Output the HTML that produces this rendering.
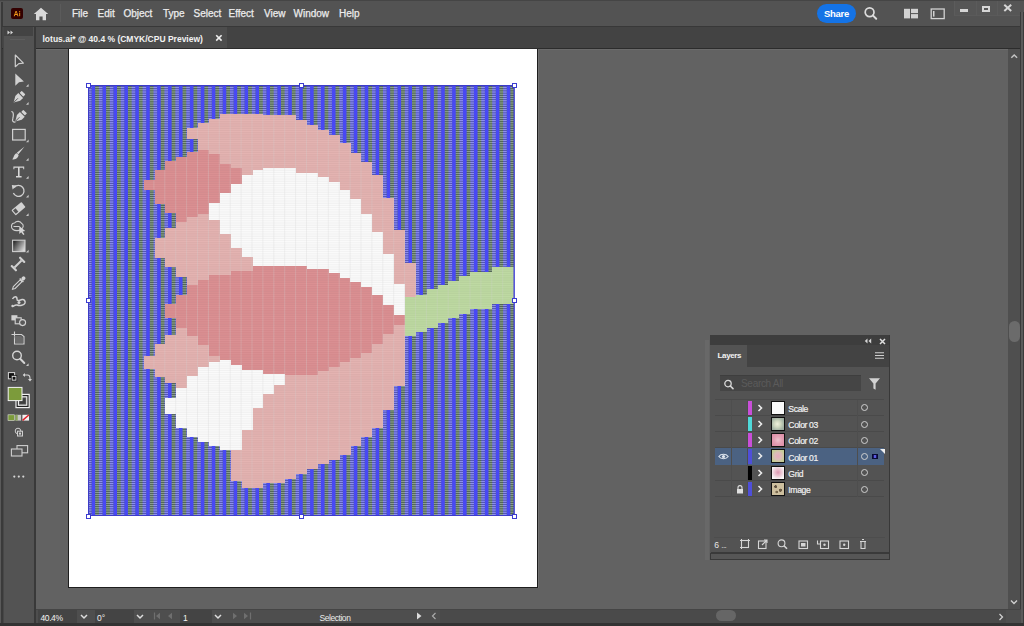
<!DOCTYPE html>
<html><head><meta charset="utf-8">
<style>
*{margin:0;padding:0;box-sizing:border-box}
html,body{width:1024px;height:626px;overflow:hidden;background:#3a3a3a;font-family:"Liberation Sans",sans-serif;position:relative}
.a{position:absolute}
svg{overflow:visible}
.mi{position:absolute;top:7.5px;font-size:10px;color:#ececec;-webkit-text-stroke:0.25px #ececec}
.lp{fill:#e2adab}.dp{fill:#d9878a}.w{fill:#fbfbfb}.g{fill:#b9d79b}
.row{position:absolute;left:715px;width:169px;height:16.3px;border-bottom:1px solid #4a4a4a}
.cb{position:absolute;left:33px;top:1px;width:3.8px;height:14.3px}
.chev{position:absolute;left:42px;top:4px}
.th{position:absolute;left:56px;top:1px;width:14px;height:14px;border:1px solid #111}
.rt{position:absolute;left:73.3px;top:4.3px;font-size:8.6px;color:#f0f0f0;letter-spacing:-0.35px;-webkit-text-stroke:0.2px #f0f0f0}
.tg{position:absolute;left:146.2px;top:4.8px;width:7px;height:7px;border:1.7px solid #cfcfcf;border-radius:50%}
.ic{stroke:#d6d6d6;fill:none;stroke-width:1.2}
.icf{fill:#d6d6d6}
</style></head><body>
<!-- menu bar -->
<div class="a" style="left:0;top:0;width:1024px;height:26px;background:#535353;border-top:1px solid #454545"></div>
<div class="a" style="left:0;top:2px;width:3px;height:624px;background:#3a3a3a;border-left:1.5px solid #5a5a5a"></div>
<div class="a" style="left:11px;top:8px;width:12px;height:11px;background:#330000;border-radius:2px"></div><svg class="a" style="left:11px;top:8px" width="12" height="11" viewBox="0 0 12 11"><path d="M2.7 8.2 L4.6 3 L5.6 3 L7.5 8.2 L6.5 8.2 L6.1 7 L4.1 7 L3.7 8.2 Z M4.4 6.1 L5.8 6.1 L5.1 4.1 Z" fill="#f59a1a"/><rect x="8.2" y="4.7" width="0.95" height="3.5" fill="#f59a1a"/><rect x="8.2" y="3.1" width="0.95" height="0.95" fill="#f59a1a"/></svg>
<svg class="a" style="left:33px;top:7px" width="16" height="14" viewBox="0 0 16 14"><path d="M8 0.8 L15.2 7 L13 7 L13 13.2 L9.6 13.2 L9.6 9.6 L6.4 9.6 L6.4 13.2 L3 13.2 L3 7 L0.8 7 Z" fill="#d8d8d8"/></svg>
<div class="a" style="left:59.5px;top:4px;width:1px;height:18px;background:#5b5b5b"></div>
<div class="mi" style="left:72px">File</div>
<div class="mi" style="left:97.5px">Edit</div>
<div class="mi" style="left:123.5px">Object</div>
<div class="mi" style="left:163px">Type</div>
<div class="mi" style="left:193.5px">Select</div>
<div class="mi" style="left:228.5px">Effect</div>
<div class="mi" style="left:264px">View</div>
<div class="mi" style="left:293.5px">Window</div>
<div class="mi" style="left:339px">Help</div>
<div class="a" style="left:817px;top:4px;width:39px;height:19px;border-radius:10px;background:#1473e6;color:#fff;font-size:9.5px;line-height:19px;text-align:center;font-weight:bold;letter-spacing:-0.3px">Share</div>
<svg class="a" style="left:863px;top:6px" width="16" height="16" viewBox="0 0 16 16"><circle cx="6.6" cy="6.2" r="4.4" fill="none" stroke="#dcdcdc" stroke-width="1.7"/><path d="M9.8 9.4 L13.2 12.8" stroke="#dcdcdc" stroke-width="2" stroke-linecap="round"/></svg>
<svg class="a" style="left:903px;top:8px" width="16" height="12" viewBox="0 0 16 12"><rect x="1" y="0.8" width="6" height="9.6" fill="#d2d2d2"/><rect x="8" y="0.8" width="7" height="4.3" fill="#d2d2d2"/><rect x="8" y="6.1" width="7" height="4.3" fill="#d2d2d2"/></svg>
<svg class="a" style="left:930px;top:8px" width="16" height="12" viewBox="0 0 16 12"><rect x="1.2" y="1" width="13" height="9.6" fill="none" stroke="#d2d2d2" stroke-width="1.3"/><rect x="3" y="3" width="1.5" height="5.6" fill="#d2d2d2"/></svg>
<div class="a" style="left:954px;top:1px;width:66px;height:15px;background:#565656;border-left:1px solid #5c5c5c;border-bottom:1px solid #5a5a5a"></div>
<div class="a" style="left:975.5px;top:1px;width:1px;height:15px;background:#5b5b5b"></div>
<div class="a" style="left:997px;top:1px;width:1px;height:15px;background:#5b5b5b"></div>
<div class="a" style="left:960px;top:9.4px;width:8px;height:2.2px;background:#d6d6d6"></div>
<div class="a" style="left:982px;top:6px;width:8px;height:6.2px;border:2px solid #d6d6d6"></div>
<svg class="a" style="left:1003px;top:4px" width="10" height="8" viewBox="0 0 10 8"><path d="M1.3 0.8 L8.2 7 M8.2 0.8 L1.3 7" stroke="#d6d6d6" stroke-width="2"/></svg>
<!-- tab bar -->
<div class="a" style="left:2px;top:25.5px;width:1018px;height:23.5px;background:#434343;border-top:1.5px solid #383838;border-bottom:1.5px solid #2c2c2c"></div>
<div class="a" style="left:35px;top:27px;width:192px;height:21px;background:#4d4d4d"></div>
<div class="a" style="left:42.5px;top:33.5px;font-size:8.5px;color:#f2f2f2;font-weight:bold;white-space:nowrap">lotus.ai* @ 40.4 % (CMYK/CPU Preview)</div>
<svg class="a" style="left:215px;top:34px" width="8" height="8" viewBox="0 0 8 8"><path d="M1.2 1.2 L6.6 6.6 M6.6 1.2 L1.2 6.6" stroke="#eee" stroke-width="1.6"/></svg>
<!-- canvas -->
<div class="a" style="left:35.5px;top:49px;width:973px;height:560px;background:#626262;border-top:1.5px solid #6b6b6b"></div>
<div class="a" style="left:68.2px;top:49px;width:470.3px;height:538.5px;background:#fff;border:1.5px solid #1e1e1e;border-top:none;box-shadow:1px 0 0 #707070"></div>
<svg class="a" style="left:88.0px;top:85.4px;overflow:hidden" width="426.5" height="431" viewBox="0 0 426.5 431">
<defs>
<pattern id="bp" width="10.9" height="2.2" patternUnits="userSpaceOnUse" x="0" y="0">
<rect width="10.9" height="2.2" fill="#6a8756"/>
<rect width="3.7" height="2.2" fill="#6c6cee"/>
<rect y="0" width="10.9" height="0.7" fill="#c4c8f0" opacity="0.55"/>
<rect y="1.3" width="10.9" height="0.6" fill="#2c3658" opacity="0.65"/>
<rect x="3.3" width="4.3" height="2.2" fill="#4848f4"/>
</pattern>
<pattern id="gp" width="10.9" height="2.2" patternUnits="userSpaceOnUse" x="0" y="0">
<rect y="1.2" width="10.9" height="0.7" fill="#a8a8a8" opacity="0.2"/>
<rect y="0.1" width="10.9" height="0.5" fill="#ffffff" opacity="0.12"/>
<rect x="0" width="0.9" height="2.2" fill="#d0d0d0" opacity="0.3"/>
</pattern>
</defs>
<rect width="426.0" height="431" fill="#6a8756"/>
<rect x="-10.98" width="3.6" height="431" fill="#6c6cee"/>
<rect x="-0.05" width="3.6" height="431" fill="#6c6cee"/>
<rect x="10.88" width="3.6" height="431" fill="#6c6cee"/>
<rect x="21.80" width="3.6" height="431" fill="#6c6cee"/>
<rect x="32.73" width="3.6" height="431" fill="#6c6cee"/>
<rect x="43.65" width="3.6" height="431" fill="#6c6cee"/>
<rect x="54.58" width="3.6" height="431" fill="#6c6cee"/>
<rect x="65.51" width="3.6" height="431" fill="#6c6cee"/>
<rect x="76.43" width="3.6" height="431" fill="#6c6cee"/>
<rect x="87.36" width="3.6" height="431" fill="#6c6cee"/>
<rect x="98.28" width="3.6" height="431" fill="#6c6cee"/>
<rect x="109.21" width="3.6" height="431" fill="#6c6cee"/>
<rect x="120.14" width="3.6" height="431" fill="#6c6cee"/>
<rect x="131.06" width="3.6" height="431" fill="#6c6cee"/>
<rect x="141.99" width="3.6" height="431" fill="#6c6cee"/>
<rect x="152.91" width="3.6" height="431" fill="#6c6cee"/>
<rect x="163.84" width="3.6" height="431" fill="#6c6cee"/>
<rect x="174.77" width="3.6" height="431" fill="#6c6cee"/>
<rect x="185.69" width="3.6" height="431" fill="#6c6cee"/>
<rect x="196.62" width="3.6" height="431" fill="#6c6cee"/>
<rect x="207.54" width="3.6" height="431" fill="#6c6cee"/>
<rect x="218.47" width="3.6" height="431" fill="#6c6cee"/>
<rect x="229.40" width="3.6" height="431" fill="#6c6cee"/>
<rect x="240.32" width="3.6" height="431" fill="#6c6cee"/>
<rect x="251.25" width="3.6" height="431" fill="#6c6cee"/>
<rect x="262.17" width="3.6" height="431" fill="#6c6cee"/>
<rect x="273.10" width="3.6" height="431" fill="#6c6cee"/>
<rect x="284.03" width="3.6" height="431" fill="#6c6cee"/>
<rect x="294.95" width="3.6" height="431" fill="#6c6cee"/>
<rect x="305.88" width="3.6" height="431" fill="#6c6cee"/>
<rect x="316.80" width="3.6" height="431" fill="#6c6cee"/>
<rect x="327.73" width="3.6" height="431" fill="#6c6cee"/>
<rect x="338.66" width="3.6" height="431" fill="#6c6cee"/>
<rect x="349.58" width="3.6" height="431" fill="#6c6cee"/>
<rect x="360.51" width="3.6" height="431" fill="#6c6cee"/>
<rect x="371.43" width="3.6" height="431" fill="#6c6cee"/>
<rect x="382.36" width="3.6" height="431" fill="#6c6cee"/>
<rect x="393.29" width="3.6" height="431" fill="#6c6cee"/>
<rect x="404.21" width="3.6" height="431" fill="#6c6cee"/>
<rect x="415.14" width="3.6" height="431" fill="#6c6cee"/>
<rect x="426.06" width="3.6" height="431" fill="#6c6cee"/>
<rect y="0.00" width="426.0" height="0.7" fill="#c4c8f0" opacity="0.55"/><rect y="1.30" width="426.0" height="0.6" fill="#2c3658" opacity="0.65"/>
<rect y="2.20" width="426.0" height="0.7" fill="#c4c8f0" opacity="0.55"/><rect y="3.50" width="426.0" height="0.6" fill="#2c3658" opacity="0.65"/>
<rect y="4.40" width="426.0" height="0.7" fill="#c4c8f0" opacity="0.55"/><rect y="5.70" width="426.0" height="0.6" fill="#2c3658" opacity="0.65"/>
<rect y="6.60" width="426.0" height="0.7" fill="#c4c8f0" opacity="0.55"/><rect y="7.90" width="426.0" height="0.6" fill="#2c3658" opacity="0.65"/>
<rect y="8.80" width="426.0" height="0.7" fill="#c4c8f0" opacity="0.55"/><rect y="10.10" width="426.0" height="0.6" fill="#2c3658" opacity="0.65"/>
<rect y="11.00" width="426.0" height="0.7" fill="#c4c8f0" opacity="0.55"/><rect y="12.30" width="426.0" height="0.6" fill="#2c3658" opacity="0.65"/>
<rect y="13.20" width="426.0" height="0.7" fill="#c4c8f0" opacity="0.55"/><rect y="14.50" width="426.0" height="0.6" fill="#2c3658" opacity="0.65"/>
<rect y="15.40" width="426.0" height="0.7" fill="#c4c8f0" opacity="0.55"/><rect y="16.70" width="426.0" height="0.6" fill="#2c3658" opacity="0.65"/>
<rect y="17.60" width="426.0" height="0.7" fill="#c4c8f0" opacity="0.55"/><rect y="18.90" width="426.0" height="0.6" fill="#2c3658" opacity="0.65"/>
<rect y="19.80" width="426.0" height="0.7" fill="#c4c8f0" opacity="0.55"/><rect y="21.10" width="426.0" height="0.6" fill="#2c3658" opacity="0.65"/>
<rect y="22.00" width="426.0" height="0.7" fill="#c4c8f0" opacity="0.55"/><rect y="23.30" width="426.0" height="0.6" fill="#2c3658" opacity="0.65"/>
<rect y="24.20" width="426.0" height="0.7" fill="#c4c8f0" opacity="0.55"/><rect y="25.50" width="426.0" height="0.6" fill="#2c3658" opacity="0.65"/>
<rect y="26.40" width="426.0" height="0.7" fill="#c4c8f0" opacity="0.55"/><rect y="27.70" width="426.0" height="0.6" fill="#2c3658" opacity="0.65"/>
<rect y="28.60" width="426.0" height="0.7" fill="#c4c8f0" opacity="0.55"/><rect y="29.90" width="426.0" height="0.6" fill="#2c3658" opacity="0.65"/>
<rect y="30.80" width="426.0" height="0.7" fill="#c4c8f0" opacity="0.55"/><rect y="32.10" width="426.0" height="0.6" fill="#2c3658" opacity="0.65"/>
<rect y="33.00" width="426.0" height="0.7" fill="#c4c8f0" opacity="0.55"/><rect y="34.30" width="426.0" height="0.6" fill="#2c3658" opacity="0.65"/>
<rect y="35.20" width="426.0" height="0.7" fill="#c4c8f0" opacity="0.55"/><rect y="36.50" width="426.0" height="0.6" fill="#2c3658" opacity="0.65"/>
<rect y="37.40" width="426.0" height="0.7" fill="#c4c8f0" opacity="0.55"/><rect y="38.70" width="426.0" height="0.6" fill="#2c3658" opacity="0.65"/>
<rect y="39.60" width="426.0" height="0.7" fill="#c4c8f0" opacity="0.55"/><rect y="40.90" width="426.0" height="0.6" fill="#2c3658" opacity="0.65"/>
<rect y="41.80" width="426.0" height="0.7" fill="#c4c8f0" opacity="0.55"/><rect y="43.10" width="426.0" height="0.6" fill="#2c3658" opacity="0.65"/>
<rect y="44.00" width="426.0" height="0.7" fill="#c4c8f0" opacity="0.55"/><rect y="45.30" width="426.0" height="0.6" fill="#2c3658" opacity="0.65"/>
<rect y="46.20" width="426.0" height="0.7" fill="#c4c8f0" opacity="0.55"/><rect y="47.50" width="426.0" height="0.6" fill="#2c3658" opacity="0.65"/>
<rect y="48.40" width="426.0" height="0.7" fill="#c4c8f0" opacity="0.55"/><rect y="49.70" width="426.0" height="0.6" fill="#2c3658" opacity="0.65"/>
<rect y="50.60" width="426.0" height="0.7" fill="#c4c8f0" opacity="0.55"/><rect y="51.90" width="426.0" height="0.6" fill="#2c3658" opacity="0.65"/>
<rect y="52.80" width="426.0" height="0.7" fill="#c4c8f0" opacity="0.55"/><rect y="54.10" width="426.0" height="0.6" fill="#2c3658" opacity="0.65"/>
<rect y="55.00" width="426.0" height="0.7" fill="#c4c8f0" opacity="0.55"/><rect y="56.30" width="426.0" height="0.6" fill="#2c3658" opacity="0.65"/>
<rect y="57.20" width="426.0" height="0.7" fill="#c4c8f0" opacity="0.55"/><rect y="58.50" width="426.0" height="0.6" fill="#2c3658" opacity="0.65"/>
<rect y="59.40" width="426.0" height="0.7" fill="#c4c8f0" opacity="0.55"/><rect y="60.70" width="426.0" height="0.6" fill="#2c3658" opacity="0.65"/>
<rect y="61.60" width="426.0" height="0.7" fill="#c4c8f0" opacity="0.55"/><rect y="62.90" width="426.0" height="0.6" fill="#2c3658" opacity="0.65"/>
<rect y="63.80" width="426.0" height="0.7" fill="#c4c8f0" opacity="0.55"/><rect y="65.10" width="426.0" height="0.6" fill="#2c3658" opacity="0.65"/>
<rect y="66.00" width="426.0" height="0.7" fill="#c4c8f0" opacity="0.55"/><rect y="67.30" width="426.0" height="0.6" fill="#2c3658" opacity="0.65"/>
<rect y="68.20" width="426.0" height="0.7" fill="#c4c8f0" opacity="0.55"/><rect y="69.50" width="426.0" height="0.6" fill="#2c3658" opacity="0.65"/>
<rect y="70.40" width="426.0" height="0.7" fill="#c4c8f0" opacity="0.55"/><rect y="71.70" width="426.0" height="0.6" fill="#2c3658" opacity="0.65"/>
<rect y="72.60" width="426.0" height="0.7" fill="#c4c8f0" opacity="0.55"/><rect y="73.90" width="426.0" height="0.6" fill="#2c3658" opacity="0.65"/>
<rect y="74.80" width="426.0" height="0.7" fill="#c4c8f0" opacity="0.55"/><rect y="76.10" width="426.0" height="0.6" fill="#2c3658" opacity="0.65"/>
<rect y="77.00" width="426.0" height="0.7" fill="#c4c8f0" opacity="0.55"/><rect y="78.30" width="426.0" height="0.6" fill="#2c3658" opacity="0.65"/>
<rect y="79.20" width="426.0" height="0.7" fill="#c4c8f0" opacity="0.55"/><rect y="80.50" width="426.0" height="0.6" fill="#2c3658" opacity="0.65"/>
<rect y="81.40" width="426.0" height="0.7" fill="#c4c8f0" opacity="0.55"/><rect y="82.70" width="426.0" height="0.6" fill="#2c3658" opacity="0.65"/>
<rect y="83.60" width="426.0" height="0.7" fill="#c4c8f0" opacity="0.55"/><rect y="84.90" width="426.0" height="0.6" fill="#2c3658" opacity="0.65"/>
<rect y="85.80" width="426.0" height="0.7" fill="#c4c8f0" opacity="0.55"/><rect y="87.10" width="426.0" height="0.6" fill="#2c3658" opacity="0.65"/>
<rect y="88.00" width="426.0" height="0.7" fill="#c4c8f0" opacity="0.55"/><rect y="89.30" width="426.0" height="0.6" fill="#2c3658" opacity="0.65"/>
<rect y="90.20" width="426.0" height="0.7" fill="#c4c8f0" opacity="0.55"/><rect y="91.50" width="426.0" height="0.6" fill="#2c3658" opacity="0.65"/>
<rect y="92.40" width="426.0" height="0.7" fill="#c4c8f0" opacity="0.55"/><rect y="93.70" width="426.0" height="0.6" fill="#2c3658" opacity="0.65"/>
<rect y="94.60" width="426.0" height="0.7" fill="#c4c8f0" opacity="0.55"/><rect y="95.90" width="426.0" height="0.6" fill="#2c3658" opacity="0.65"/>
<rect y="96.80" width="426.0" height="0.7" fill="#c4c8f0" opacity="0.55"/><rect y="98.10" width="426.0" height="0.6" fill="#2c3658" opacity="0.65"/>
<rect y="99.00" width="426.0" height="0.7" fill="#c4c8f0" opacity="0.55"/><rect y="100.30" width="426.0" height="0.6" fill="#2c3658" opacity="0.65"/>
<rect y="101.20" width="426.0" height="0.7" fill="#c4c8f0" opacity="0.55"/><rect y="102.50" width="426.0" height="0.6" fill="#2c3658" opacity="0.65"/>
<rect y="103.40" width="426.0" height="0.7" fill="#c4c8f0" opacity="0.55"/><rect y="104.70" width="426.0" height="0.6" fill="#2c3658" opacity="0.65"/>
<rect y="105.60" width="426.0" height="0.7" fill="#c4c8f0" opacity="0.55"/><rect y="106.90" width="426.0" height="0.6" fill="#2c3658" opacity="0.65"/>
<rect y="107.80" width="426.0" height="0.7" fill="#c4c8f0" opacity="0.55"/><rect y="109.10" width="426.0" height="0.6" fill="#2c3658" opacity="0.65"/>
<rect y="110.00" width="426.0" height="0.7" fill="#c4c8f0" opacity="0.55"/><rect y="111.30" width="426.0" height="0.6" fill="#2c3658" opacity="0.65"/>
<rect y="112.20" width="426.0" height="0.7" fill="#c4c8f0" opacity="0.55"/><rect y="113.50" width="426.0" height="0.6" fill="#2c3658" opacity="0.65"/>
<rect y="114.40" width="426.0" height="0.7" fill="#c4c8f0" opacity="0.55"/><rect y="115.70" width="426.0" height="0.6" fill="#2c3658" opacity="0.65"/>
<rect y="116.60" width="426.0" height="0.7" fill="#c4c8f0" opacity="0.55"/><rect y="117.90" width="426.0" height="0.6" fill="#2c3658" opacity="0.65"/>
<rect y="118.80" width="426.0" height="0.7" fill="#c4c8f0" opacity="0.55"/><rect y="120.10" width="426.0" height="0.6" fill="#2c3658" opacity="0.65"/>
<rect y="121.00" width="426.0" height="0.7" fill="#c4c8f0" opacity="0.55"/><rect y="122.30" width="426.0" height="0.6" fill="#2c3658" opacity="0.65"/>
<rect y="123.20" width="426.0" height="0.7" fill="#c4c8f0" opacity="0.55"/><rect y="124.50" width="426.0" height="0.6" fill="#2c3658" opacity="0.65"/>
<rect y="125.40" width="426.0" height="0.7" fill="#c4c8f0" opacity="0.55"/><rect y="126.70" width="426.0" height="0.6" fill="#2c3658" opacity="0.65"/>
<rect y="127.60" width="426.0" height="0.7" fill="#c4c8f0" opacity="0.55"/><rect y="128.90" width="426.0" height="0.6" fill="#2c3658" opacity="0.65"/>
<rect y="129.80" width="426.0" height="0.7" fill="#c4c8f0" opacity="0.55"/><rect y="131.10" width="426.0" height="0.6" fill="#2c3658" opacity="0.65"/>
<rect y="132.00" width="426.0" height="0.7" fill="#c4c8f0" opacity="0.55"/><rect y="133.30" width="426.0" height="0.6" fill="#2c3658" opacity="0.65"/>
<rect y="134.20" width="426.0" height="0.7" fill="#c4c8f0" opacity="0.55"/><rect y="135.50" width="426.0" height="0.6" fill="#2c3658" opacity="0.65"/>
<rect y="136.40" width="426.0" height="0.7" fill="#c4c8f0" opacity="0.55"/><rect y="137.70" width="426.0" height="0.6" fill="#2c3658" opacity="0.65"/>
<rect y="138.60" width="426.0" height="0.7" fill="#c4c8f0" opacity="0.55"/><rect y="139.90" width="426.0" height="0.6" fill="#2c3658" opacity="0.65"/>
<rect y="140.80" width="426.0" height="0.7" fill="#c4c8f0" opacity="0.55"/><rect y="142.10" width="426.0" height="0.6" fill="#2c3658" opacity="0.65"/>
<rect y="143.00" width="426.0" height="0.7" fill="#c4c8f0" opacity="0.55"/><rect y="144.30" width="426.0" height="0.6" fill="#2c3658" opacity="0.65"/>
<rect y="145.20" width="426.0" height="0.7" fill="#c4c8f0" opacity="0.55"/><rect y="146.50" width="426.0" height="0.6" fill="#2c3658" opacity="0.65"/>
<rect y="147.40" width="426.0" height="0.7" fill="#c4c8f0" opacity="0.55"/><rect y="148.70" width="426.0" height="0.6" fill="#2c3658" opacity="0.65"/>
<rect y="149.60" width="426.0" height="0.7" fill="#c4c8f0" opacity="0.55"/><rect y="150.90" width="426.0" height="0.6" fill="#2c3658" opacity="0.65"/>
<rect y="151.80" width="426.0" height="0.7" fill="#c4c8f0" opacity="0.55"/><rect y="153.10" width="426.0" height="0.6" fill="#2c3658" opacity="0.65"/>
<rect y="154.00" width="426.0" height="0.7" fill="#c4c8f0" opacity="0.55"/><rect y="155.30" width="426.0" height="0.6" fill="#2c3658" opacity="0.65"/>
<rect y="156.20" width="426.0" height="0.7" fill="#c4c8f0" opacity="0.55"/><rect y="157.50" width="426.0" height="0.6" fill="#2c3658" opacity="0.65"/>
<rect y="158.40" width="426.0" height="0.7" fill="#c4c8f0" opacity="0.55"/><rect y="159.70" width="426.0" height="0.6" fill="#2c3658" opacity="0.65"/>
<rect y="160.60" width="426.0" height="0.7" fill="#c4c8f0" opacity="0.55"/><rect y="161.90" width="426.0" height="0.6" fill="#2c3658" opacity="0.65"/>
<rect y="162.80" width="426.0" height="0.7" fill="#c4c8f0" opacity="0.55"/><rect y="164.10" width="426.0" height="0.6" fill="#2c3658" opacity="0.65"/>
<rect y="165.00" width="426.0" height="0.7" fill="#c4c8f0" opacity="0.55"/><rect y="166.30" width="426.0" height="0.6" fill="#2c3658" opacity="0.65"/>
<rect y="167.20" width="426.0" height="0.7" fill="#c4c8f0" opacity="0.55"/><rect y="168.50" width="426.0" height="0.6" fill="#2c3658" opacity="0.65"/>
<rect y="169.40" width="426.0" height="0.7" fill="#c4c8f0" opacity="0.55"/><rect y="170.70" width="426.0" height="0.6" fill="#2c3658" opacity="0.65"/>
<rect y="171.60" width="426.0" height="0.7" fill="#c4c8f0" opacity="0.55"/><rect y="172.90" width="426.0" height="0.6" fill="#2c3658" opacity="0.65"/>
<rect y="173.80" width="426.0" height="0.7" fill="#c4c8f0" opacity="0.55"/><rect y="175.10" width="426.0" height="0.6" fill="#2c3658" opacity="0.65"/>
<rect y="176.00" width="426.0" height="0.7" fill="#c4c8f0" opacity="0.55"/><rect y="177.30" width="426.0" height="0.6" fill="#2c3658" opacity="0.65"/>
<rect y="178.20" width="426.0" height="0.7" fill="#c4c8f0" opacity="0.55"/><rect y="179.50" width="426.0" height="0.6" fill="#2c3658" opacity="0.65"/>
<rect y="180.40" width="426.0" height="0.7" fill="#c4c8f0" opacity="0.55"/><rect y="181.70" width="426.0" height="0.6" fill="#2c3658" opacity="0.65"/>
<rect y="182.60" width="426.0" height="0.7" fill="#c4c8f0" opacity="0.55"/><rect y="183.90" width="426.0" height="0.6" fill="#2c3658" opacity="0.65"/>
<rect y="184.80" width="426.0" height="0.7" fill="#c4c8f0" opacity="0.55"/><rect y="186.10" width="426.0" height="0.6" fill="#2c3658" opacity="0.65"/>
<rect y="187.00" width="426.0" height="0.7" fill="#c4c8f0" opacity="0.55"/><rect y="188.30" width="426.0" height="0.6" fill="#2c3658" opacity="0.65"/>
<rect y="189.20" width="426.0" height="0.7" fill="#c4c8f0" opacity="0.55"/><rect y="190.50" width="426.0" height="0.6" fill="#2c3658" opacity="0.65"/>
<rect y="191.40" width="426.0" height="0.7" fill="#c4c8f0" opacity="0.55"/><rect y="192.70" width="426.0" height="0.6" fill="#2c3658" opacity="0.65"/>
<rect y="193.60" width="426.0" height="0.7" fill="#c4c8f0" opacity="0.55"/><rect y="194.90" width="426.0" height="0.6" fill="#2c3658" opacity="0.65"/>
<rect y="195.80" width="426.0" height="0.7" fill="#c4c8f0" opacity="0.55"/><rect y="197.10" width="426.0" height="0.6" fill="#2c3658" opacity="0.65"/>
<rect y="198.00" width="426.0" height="0.7" fill="#c4c8f0" opacity="0.55"/><rect y="199.30" width="426.0" height="0.6" fill="#2c3658" opacity="0.65"/>
<rect y="200.20" width="426.0" height="0.7" fill="#c4c8f0" opacity="0.55"/><rect y="201.50" width="426.0" height="0.6" fill="#2c3658" opacity="0.65"/>
<rect y="202.40" width="426.0" height="0.7" fill="#c4c8f0" opacity="0.55"/><rect y="203.70" width="426.0" height="0.6" fill="#2c3658" opacity="0.65"/>
<rect y="204.60" width="426.0" height="0.7" fill="#c4c8f0" opacity="0.55"/><rect y="205.90" width="426.0" height="0.6" fill="#2c3658" opacity="0.65"/>
<rect y="206.80" width="426.0" height="0.7" fill="#c4c8f0" opacity="0.55"/><rect y="208.10" width="426.0" height="0.6" fill="#2c3658" opacity="0.65"/>
<rect y="209.00" width="426.0" height="0.7" fill="#c4c8f0" opacity="0.55"/><rect y="210.30" width="426.0" height="0.6" fill="#2c3658" opacity="0.65"/>
<rect y="211.20" width="426.0" height="0.7" fill="#c4c8f0" opacity="0.55"/><rect y="212.50" width="426.0" height="0.6" fill="#2c3658" opacity="0.65"/>
<rect y="213.40" width="426.0" height="0.7" fill="#c4c8f0" opacity="0.55"/><rect y="214.70" width="426.0" height="0.6" fill="#2c3658" opacity="0.65"/>
<rect y="215.60" width="426.0" height="0.7" fill="#c4c8f0" opacity="0.55"/><rect y="216.90" width="426.0" height="0.6" fill="#2c3658" opacity="0.65"/>
<rect y="217.80" width="426.0" height="0.7" fill="#c4c8f0" opacity="0.55"/><rect y="219.10" width="426.0" height="0.6" fill="#2c3658" opacity="0.65"/>
<rect y="220.00" width="426.0" height="0.7" fill="#c4c8f0" opacity="0.55"/><rect y="221.30" width="426.0" height="0.6" fill="#2c3658" opacity="0.65"/>
<rect y="222.20" width="426.0" height="0.7" fill="#c4c8f0" opacity="0.55"/><rect y="223.50" width="426.0" height="0.6" fill="#2c3658" opacity="0.65"/>
<rect y="224.40" width="426.0" height="0.7" fill="#c4c8f0" opacity="0.55"/><rect y="225.70" width="426.0" height="0.6" fill="#2c3658" opacity="0.65"/>
<rect y="226.60" width="426.0" height="0.7" fill="#c4c8f0" opacity="0.55"/><rect y="227.90" width="426.0" height="0.6" fill="#2c3658" opacity="0.65"/>
<rect y="228.80" width="426.0" height="0.7" fill="#c4c8f0" opacity="0.55"/><rect y="230.10" width="426.0" height="0.6" fill="#2c3658" opacity="0.65"/>
<rect y="231.00" width="426.0" height="0.7" fill="#c4c8f0" opacity="0.55"/><rect y="232.30" width="426.0" height="0.6" fill="#2c3658" opacity="0.65"/>
<rect y="233.20" width="426.0" height="0.7" fill="#c4c8f0" opacity="0.55"/><rect y="234.50" width="426.0" height="0.6" fill="#2c3658" opacity="0.65"/>
<rect y="235.40" width="426.0" height="0.7" fill="#c4c8f0" opacity="0.55"/><rect y="236.70" width="426.0" height="0.6" fill="#2c3658" opacity="0.65"/>
<rect y="237.60" width="426.0" height="0.7" fill="#c4c8f0" opacity="0.55"/><rect y="238.90" width="426.0" height="0.6" fill="#2c3658" opacity="0.65"/>
<rect y="239.80" width="426.0" height="0.7" fill="#c4c8f0" opacity="0.55"/><rect y="241.10" width="426.0" height="0.6" fill="#2c3658" opacity="0.65"/>
<rect y="242.00" width="426.0" height="0.7" fill="#c4c8f0" opacity="0.55"/><rect y="243.30" width="426.0" height="0.6" fill="#2c3658" opacity="0.65"/>
<rect y="244.20" width="426.0" height="0.7" fill="#c4c8f0" opacity="0.55"/><rect y="245.50" width="426.0" height="0.6" fill="#2c3658" opacity="0.65"/>
<rect y="246.40" width="426.0" height="0.7" fill="#c4c8f0" opacity="0.55"/><rect y="247.70" width="426.0" height="0.6" fill="#2c3658" opacity="0.65"/>
<rect y="248.60" width="426.0" height="0.7" fill="#c4c8f0" opacity="0.55"/><rect y="249.90" width="426.0" height="0.6" fill="#2c3658" opacity="0.65"/>
<rect y="250.80" width="426.0" height="0.7" fill="#c4c8f0" opacity="0.55"/><rect y="252.10" width="426.0" height="0.6" fill="#2c3658" opacity="0.65"/>
<rect y="253.00" width="426.0" height="0.7" fill="#c4c8f0" opacity="0.55"/><rect y="254.30" width="426.0" height="0.6" fill="#2c3658" opacity="0.65"/>
<rect y="255.20" width="426.0" height="0.7" fill="#c4c8f0" opacity="0.55"/><rect y="256.50" width="426.0" height="0.6" fill="#2c3658" opacity="0.65"/>
<rect y="257.40" width="426.0" height="0.7" fill="#c4c8f0" opacity="0.55"/><rect y="258.70" width="426.0" height="0.6" fill="#2c3658" opacity="0.65"/>
<rect y="259.60" width="426.0" height="0.7" fill="#c4c8f0" opacity="0.55"/><rect y="260.90" width="426.0" height="0.6" fill="#2c3658" opacity="0.65"/>
<rect y="261.80" width="426.0" height="0.7" fill="#c4c8f0" opacity="0.55"/><rect y="263.10" width="426.0" height="0.6" fill="#2c3658" opacity="0.65"/>
<rect y="264.00" width="426.0" height="0.7" fill="#c4c8f0" opacity="0.55"/><rect y="265.30" width="426.0" height="0.6" fill="#2c3658" opacity="0.65"/>
<rect y="266.20" width="426.0" height="0.7" fill="#c4c8f0" opacity="0.55"/><rect y="267.50" width="426.0" height="0.6" fill="#2c3658" opacity="0.65"/>
<rect y="268.40" width="426.0" height="0.7" fill="#c4c8f0" opacity="0.55"/><rect y="269.70" width="426.0" height="0.6" fill="#2c3658" opacity="0.65"/>
<rect y="270.60" width="426.0" height="0.7" fill="#c4c8f0" opacity="0.55"/><rect y="271.90" width="426.0" height="0.6" fill="#2c3658" opacity="0.65"/>
<rect y="272.80" width="426.0" height="0.7" fill="#c4c8f0" opacity="0.55"/><rect y="274.10" width="426.0" height="0.6" fill="#2c3658" opacity="0.65"/>
<rect y="275.00" width="426.0" height="0.7" fill="#c4c8f0" opacity="0.55"/><rect y="276.30" width="426.0" height="0.6" fill="#2c3658" opacity="0.65"/>
<rect y="277.20" width="426.0" height="0.7" fill="#c4c8f0" opacity="0.55"/><rect y="278.50" width="426.0" height="0.6" fill="#2c3658" opacity="0.65"/>
<rect y="279.40" width="426.0" height="0.7" fill="#c4c8f0" opacity="0.55"/><rect y="280.70" width="426.0" height="0.6" fill="#2c3658" opacity="0.65"/>
<rect y="281.60" width="426.0" height="0.7" fill="#c4c8f0" opacity="0.55"/><rect y="282.90" width="426.0" height="0.6" fill="#2c3658" opacity="0.65"/>
<rect y="283.80" width="426.0" height="0.7" fill="#c4c8f0" opacity="0.55"/><rect y="285.10" width="426.0" height="0.6" fill="#2c3658" opacity="0.65"/>
<rect y="286.00" width="426.0" height="0.7" fill="#c4c8f0" opacity="0.55"/><rect y="287.30" width="426.0" height="0.6" fill="#2c3658" opacity="0.65"/>
<rect y="288.20" width="426.0" height="0.7" fill="#c4c8f0" opacity="0.55"/><rect y="289.50" width="426.0" height="0.6" fill="#2c3658" opacity="0.65"/>
<rect y="290.40" width="426.0" height="0.7" fill="#c4c8f0" opacity="0.55"/><rect y="291.70" width="426.0" height="0.6" fill="#2c3658" opacity="0.65"/>
<rect y="292.60" width="426.0" height="0.7" fill="#c4c8f0" opacity="0.55"/><rect y="293.90" width="426.0" height="0.6" fill="#2c3658" opacity="0.65"/>
<rect y="294.80" width="426.0" height="0.7" fill="#c4c8f0" opacity="0.55"/><rect y="296.10" width="426.0" height="0.6" fill="#2c3658" opacity="0.65"/>
<rect y="297.00" width="426.0" height="0.7" fill="#c4c8f0" opacity="0.55"/><rect y="298.30" width="426.0" height="0.6" fill="#2c3658" opacity="0.65"/>
<rect y="299.20" width="426.0" height="0.7" fill="#c4c8f0" opacity="0.55"/><rect y="300.50" width="426.0" height="0.6" fill="#2c3658" opacity="0.65"/>
<rect y="301.40" width="426.0" height="0.7" fill="#c4c8f0" opacity="0.55"/><rect y="302.70" width="426.0" height="0.6" fill="#2c3658" opacity="0.65"/>
<rect y="303.60" width="426.0" height="0.7" fill="#c4c8f0" opacity="0.55"/><rect y="304.90" width="426.0" height="0.6" fill="#2c3658" opacity="0.65"/>
<rect y="305.80" width="426.0" height="0.7" fill="#c4c8f0" opacity="0.55"/><rect y="307.10" width="426.0" height="0.6" fill="#2c3658" opacity="0.65"/>
<rect y="308.00" width="426.0" height="0.7" fill="#c4c8f0" opacity="0.55"/><rect y="309.30" width="426.0" height="0.6" fill="#2c3658" opacity="0.65"/>
<rect y="310.20" width="426.0" height="0.7" fill="#c4c8f0" opacity="0.55"/><rect y="311.50" width="426.0" height="0.6" fill="#2c3658" opacity="0.65"/>
<rect y="312.40" width="426.0" height="0.7" fill="#c4c8f0" opacity="0.55"/><rect y="313.70" width="426.0" height="0.6" fill="#2c3658" opacity="0.65"/>
<rect y="314.60" width="426.0" height="0.7" fill="#c4c8f0" opacity="0.55"/><rect y="315.90" width="426.0" height="0.6" fill="#2c3658" opacity="0.65"/>
<rect y="316.80" width="426.0" height="0.7" fill="#c4c8f0" opacity="0.55"/><rect y="318.10" width="426.0" height="0.6" fill="#2c3658" opacity="0.65"/>
<rect y="319.00" width="426.0" height="0.7" fill="#c4c8f0" opacity="0.55"/><rect y="320.30" width="426.0" height="0.6" fill="#2c3658" opacity="0.65"/>
<rect y="321.20" width="426.0" height="0.7" fill="#c4c8f0" opacity="0.55"/><rect y="322.50" width="426.0" height="0.6" fill="#2c3658" opacity="0.65"/>
<rect y="323.40" width="426.0" height="0.7" fill="#c4c8f0" opacity="0.55"/><rect y="324.70" width="426.0" height="0.6" fill="#2c3658" opacity="0.65"/>
<rect y="325.60" width="426.0" height="0.7" fill="#c4c8f0" opacity="0.55"/><rect y="326.90" width="426.0" height="0.6" fill="#2c3658" opacity="0.65"/>
<rect y="327.80" width="426.0" height="0.7" fill="#c4c8f0" opacity="0.55"/><rect y="329.10" width="426.0" height="0.6" fill="#2c3658" opacity="0.65"/>
<rect y="330.00" width="426.0" height="0.7" fill="#c4c8f0" opacity="0.55"/><rect y="331.30" width="426.0" height="0.6" fill="#2c3658" opacity="0.65"/>
<rect y="332.20" width="426.0" height="0.7" fill="#c4c8f0" opacity="0.55"/><rect y="333.50" width="426.0" height="0.6" fill="#2c3658" opacity="0.65"/>
<rect y="334.40" width="426.0" height="0.7" fill="#c4c8f0" opacity="0.55"/><rect y="335.70" width="426.0" height="0.6" fill="#2c3658" opacity="0.65"/>
<rect y="336.60" width="426.0" height="0.7" fill="#c4c8f0" opacity="0.55"/><rect y="337.90" width="426.0" height="0.6" fill="#2c3658" opacity="0.65"/>
<rect y="338.80" width="426.0" height="0.7" fill="#c4c8f0" opacity="0.55"/><rect y="340.10" width="426.0" height="0.6" fill="#2c3658" opacity="0.65"/>
<rect y="341.00" width="426.0" height="0.7" fill="#c4c8f0" opacity="0.55"/><rect y="342.30" width="426.0" height="0.6" fill="#2c3658" opacity="0.65"/>
<rect y="343.20" width="426.0" height="0.7" fill="#c4c8f0" opacity="0.55"/><rect y="344.50" width="426.0" height="0.6" fill="#2c3658" opacity="0.65"/>
<rect y="345.40" width="426.0" height="0.7" fill="#c4c8f0" opacity="0.55"/><rect y="346.70" width="426.0" height="0.6" fill="#2c3658" opacity="0.65"/>
<rect y="347.60" width="426.0" height="0.7" fill="#c4c8f0" opacity="0.55"/><rect y="348.90" width="426.0" height="0.6" fill="#2c3658" opacity="0.65"/>
<rect y="349.80" width="426.0" height="0.7" fill="#c4c8f0" opacity="0.55"/><rect y="351.10" width="426.0" height="0.6" fill="#2c3658" opacity="0.65"/>
<rect y="352.00" width="426.0" height="0.7" fill="#c4c8f0" opacity="0.55"/><rect y="353.30" width="426.0" height="0.6" fill="#2c3658" opacity="0.65"/>
<rect y="354.20" width="426.0" height="0.7" fill="#c4c8f0" opacity="0.55"/><rect y="355.50" width="426.0" height="0.6" fill="#2c3658" opacity="0.65"/>
<rect y="356.40" width="426.0" height="0.7" fill="#c4c8f0" opacity="0.55"/><rect y="357.70" width="426.0" height="0.6" fill="#2c3658" opacity="0.65"/>
<rect y="358.60" width="426.0" height="0.7" fill="#c4c8f0" opacity="0.55"/><rect y="359.90" width="426.0" height="0.6" fill="#2c3658" opacity="0.65"/>
<rect y="360.80" width="426.0" height="0.7" fill="#c4c8f0" opacity="0.55"/><rect y="362.10" width="426.0" height="0.6" fill="#2c3658" opacity="0.65"/>
<rect y="363.00" width="426.0" height="0.7" fill="#c4c8f0" opacity="0.55"/><rect y="364.30" width="426.0" height="0.6" fill="#2c3658" opacity="0.65"/>
<rect y="365.20" width="426.0" height="0.7" fill="#c4c8f0" opacity="0.55"/><rect y="366.50" width="426.0" height="0.6" fill="#2c3658" opacity="0.65"/>
<rect y="367.40" width="426.0" height="0.7" fill="#c4c8f0" opacity="0.55"/><rect y="368.70" width="426.0" height="0.6" fill="#2c3658" opacity="0.65"/>
<rect y="369.60" width="426.0" height="0.7" fill="#c4c8f0" opacity="0.55"/><rect y="370.90" width="426.0" height="0.6" fill="#2c3658" opacity="0.65"/>
<rect y="371.80" width="426.0" height="0.7" fill="#c4c8f0" opacity="0.55"/><rect y="373.10" width="426.0" height="0.6" fill="#2c3658" opacity="0.65"/>
<rect y="374.00" width="426.0" height="0.7" fill="#c4c8f0" opacity="0.55"/><rect y="375.30" width="426.0" height="0.6" fill="#2c3658" opacity="0.65"/>
<rect y="376.20" width="426.0" height="0.7" fill="#c4c8f0" opacity="0.55"/><rect y="377.50" width="426.0" height="0.6" fill="#2c3658" opacity="0.65"/>
<rect y="378.40" width="426.0" height="0.7" fill="#c4c8f0" opacity="0.55"/><rect y="379.70" width="426.0" height="0.6" fill="#2c3658" opacity="0.65"/>
<rect y="380.60" width="426.0" height="0.7" fill="#c4c8f0" opacity="0.55"/><rect y="381.90" width="426.0" height="0.6" fill="#2c3658" opacity="0.65"/>
<rect y="382.80" width="426.0" height="0.7" fill="#c4c8f0" opacity="0.55"/><rect y="384.10" width="426.0" height="0.6" fill="#2c3658" opacity="0.65"/>
<rect y="385.00" width="426.0" height="0.7" fill="#c4c8f0" opacity="0.55"/><rect y="386.30" width="426.0" height="0.6" fill="#2c3658" opacity="0.65"/>
<rect y="387.20" width="426.0" height="0.7" fill="#c4c8f0" opacity="0.55"/><rect y="388.50" width="426.0" height="0.6" fill="#2c3658" opacity="0.65"/>
<rect y="389.40" width="426.0" height="0.7" fill="#c4c8f0" opacity="0.55"/><rect y="390.70" width="426.0" height="0.6" fill="#2c3658" opacity="0.65"/>
<rect y="391.60" width="426.0" height="0.7" fill="#c4c8f0" opacity="0.55"/><rect y="392.90" width="426.0" height="0.6" fill="#2c3658" opacity="0.65"/>
<rect y="393.80" width="426.0" height="0.7" fill="#c4c8f0" opacity="0.55"/><rect y="395.10" width="426.0" height="0.6" fill="#2c3658" opacity="0.65"/>
<rect y="396.00" width="426.0" height="0.7" fill="#c4c8f0" opacity="0.55"/><rect y="397.30" width="426.0" height="0.6" fill="#2c3658" opacity="0.65"/>
<rect y="398.20" width="426.0" height="0.7" fill="#c4c8f0" opacity="0.55"/><rect y="399.50" width="426.0" height="0.6" fill="#2c3658" opacity="0.65"/>
<rect y="400.40" width="426.0" height="0.7" fill="#c4c8f0" opacity="0.55"/><rect y="401.70" width="426.0" height="0.6" fill="#2c3658" opacity="0.65"/>
<rect y="402.60" width="426.0" height="0.7" fill="#c4c8f0" opacity="0.55"/><rect y="403.90" width="426.0" height="0.6" fill="#2c3658" opacity="0.65"/>
<rect y="404.80" width="426.0" height="0.7" fill="#c4c8f0" opacity="0.55"/><rect y="406.10" width="426.0" height="0.6" fill="#2c3658" opacity="0.65"/>
<rect y="407.00" width="426.0" height="0.7" fill="#c4c8f0" opacity="0.55"/><rect y="408.30" width="426.0" height="0.6" fill="#2c3658" opacity="0.65"/>
<rect y="409.20" width="426.0" height="0.7" fill="#c4c8f0" opacity="0.55"/><rect y="410.50" width="426.0" height="0.6" fill="#2c3658" opacity="0.65"/>
<rect y="411.40" width="426.0" height="0.7" fill="#c4c8f0" opacity="0.55"/><rect y="412.70" width="426.0" height="0.6" fill="#2c3658" opacity="0.65"/>
<rect y="413.60" width="426.0" height="0.7" fill="#c4c8f0" opacity="0.55"/><rect y="414.90" width="426.0" height="0.6" fill="#2c3658" opacity="0.65"/>
<rect y="415.80" width="426.0" height="0.7" fill="#c4c8f0" opacity="0.55"/><rect y="417.10" width="426.0" height="0.6" fill="#2c3658" opacity="0.65"/>
<rect y="418.00" width="426.0" height="0.7" fill="#c4c8f0" opacity="0.55"/><rect y="419.30" width="426.0" height="0.6" fill="#2c3658" opacity="0.65"/>
<rect y="420.20" width="426.0" height="0.7" fill="#c4c8f0" opacity="0.55"/><rect y="421.50" width="426.0" height="0.6" fill="#2c3658" opacity="0.65"/>
<rect y="422.40" width="426.0" height="0.7" fill="#c4c8f0" opacity="0.55"/><rect y="423.70" width="426.0" height="0.6" fill="#2c3658" opacity="0.65"/>
<rect y="424.60" width="426.0" height="0.7" fill="#c4c8f0" opacity="0.55"/><rect y="425.90" width="426.0" height="0.6" fill="#2c3658" opacity="0.65"/>
<rect y="426.80" width="426.0" height="0.7" fill="#c4c8f0" opacity="0.55"/><rect y="428.10" width="426.0" height="0.6" fill="#2c3658" opacity="0.65"/>
<rect y="429.00" width="426.0" height="0.7" fill="#c4c8f0" opacity="0.55"/><rect y="430.30" width="426.0" height="0.6" fill="#2c3658" opacity="0.65"/>
<rect x="3.55" width="3.6" height="431" fill="#4848f4"/>
<rect x="14.48" width="3.6" height="431" fill="#4848f4"/>
<rect x="25.40" width="3.6" height="431" fill="#4848f4"/>
<rect x="36.33" width="3.6" height="431" fill="#4848f4"/>
<rect x="47.25" width="3.6" height="431" fill="#4848f4"/>
<rect x="58.18" width="3.6" height="431" fill="#4848f4"/>
<rect x="69.11" width="3.6" height="431" fill="#4848f4"/>
<rect x="80.03" width="3.6" height="431" fill="#4848f4"/>
<rect x="90.96" width="3.6" height="431" fill="#4848f4"/>
<rect x="101.88" width="3.6" height="431" fill="#4848f4"/>
<rect x="112.81" width="3.6" height="431" fill="#4848f4"/>
<rect x="123.74" width="3.6" height="431" fill="#4848f4"/>
<rect x="134.66" width="3.6" height="431" fill="#4848f4"/>
<rect x="145.59" width="3.6" height="431" fill="#4848f4"/>
<rect x="156.51" width="3.6" height="431" fill="#4848f4"/>
<rect x="167.44" width="3.6" height="431" fill="#4848f4"/>
<rect x="178.37" width="3.6" height="431" fill="#4848f4"/>
<rect x="189.29" width="3.6" height="431" fill="#4848f4"/>
<rect x="200.22" width="3.6" height="431" fill="#4848f4"/>
<rect x="211.14" width="3.6" height="431" fill="#4848f4"/>
<rect x="222.07" width="3.6" height="431" fill="#4848f4"/>
<rect x="233.00" width="3.6" height="431" fill="#4848f4"/>
<rect x="243.92" width="3.6" height="431" fill="#4848f4"/>
<rect x="254.85" width="3.6" height="431" fill="#4848f4"/>
<rect x="265.77" width="3.6" height="431" fill="#4848f4"/>
<rect x="276.70" width="3.6" height="431" fill="#4848f4"/>
<rect x="287.63" width="3.6" height="431" fill="#4848f4"/>
<rect x="298.55" width="3.6" height="431" fill="#4848f4"/>
<rect x="309.48" width="3.6" height="431" fill="#4848f4"/>
<rect x="320.40" width="3.6" height="431" fill="#4848f4"/>
<rect x="331.33" width="3.6" height="431" fill="#4848f4"/>
<rect x="342.26" width="3.6" height="431" fill="#4848f4"/>
<rect x="353.18" width="3.6" height="431" fill="#4848f4"/>
<rect x="364.11" width="3.6" height="431" fill="#4848f4"/>
<rect x="375.03" width="3.6" height="431" fill="#4848f4"/>
<rect x="385.96" width="3.6" height="431" fill="#4848f4"/>
<rect x="396.89" width="3.6" height="431" fill="#4848f4"/>
<rect x="407.81" width="3.6" height="431" fill="#4848f4"/>
<rect x="418.74" width="3.6" height="431" fill="#4848f4"/>
<g shape-rendering="crispEdges">
<rect class="dp" x="55.6" y="95.4" width="10.94" height="9.1"/>
<rect class="lp" x="55.6" y="271.2" width="10.94" height="12.5"/>
<rect class="dp" x="66.5" y="85.1" width="10.94" height="33.5"/>
<rect class="lp" x="66.5" y="152.6" width="10.94" height="20.3"/>
<rect class="lp" x="66.5" y="259.3" width="10.94" height="32.7"/>
<rect class="dp" x="77.4" y="76.3" width="10.94" height="51.5"/>
<rect class="lp" x="77.4" y="142.6" width="10.94" height="39.4"/>
<rect class="dp" x="77.4" y="218.6" width="10.94" height="14.1"/>
<rect class="lp" x="77.4" y="250.1" width="10.94" height="47.7"/>
<rect class="w" x="77.4" y="312.7" width="10.94" height="16.7"/>
<rect class="dp" x="88.3" y="71.5" width="10.94" height="65.4"/>
<rect class="lp" x="88.3" y="136.9" width="10.94" height="55.1"/>
<rect class="dp" x="88.3" y="209.5" width="10.94" height="33.1"/>
<rect class="lp" x="88.3" y="242.6" width="10.94" height="60.2"/>
<rect class="w" x="88.3" y="302.8" width="10.94" height="40.1"/>
<rect class="lp" x="99.2" y="42.6" width="10.94" height="11.8"/>
<rect class="dp" x="99.2" y="66.7" width="10.94" height="65.2"/>
<rect class="lp" x="99.2" y="131.9" width="10.94" height="67.6"/>
<rect class="dp" x="99.2" y="199.5" width="10.94" height="51.5"/>
<rect class="lp" x="99.2" y="251.0" width="10.94" height="40.1"/>
<rect class="w" x="99.2" y="291.1" width="10.94" height="60.9"/>
<rect class="lp" x="110.1" y="37.8" width="10.94" height="26.8"/>
<rect class="dp" x="110.1" y="64.6" width="10.94" height="64.0"/>
<rect class="lp" x="110.1" y="128.6" width="10.94" height="66.7"/>
<rect class="dp" x="110.1" y="195.3" width="10.94" height="64.8"/>
<rect class="lp" x="110.1" y="260.1" width="10.94" height="21.9"/>
<rect class="w" x="110.1" y="282.0" width="10.94" height="75.0"/>
<rect class="lp" x="120.9" y="33.5" width="10.94" height="35.9"/>
<rect class="dp" x="120.9" y="69.4" width="10.94" height="48.4"/>
<rect class="w" x="120.9" y="117.8" width="10.94" height="17.4"/>
<rect class="lp" x="120.9" y="135.2" width="10.94" height="55.1"/>
<rect class="dp" x="120.9" y="190.3" width="10.94" height="80.9"/>
<rect class="lp" x="120.9" y="271.2" width="10.94" height="5.8"/>
<rect class="w" x="120.9" y="277.0" width="10.94" height="84.2"/>
<rect class="lp" x="131.8" y="28.7" width="10.94" height="49.8"/>
<rect class="dp" x="131.8" y="78.5" width="10.94" height="29.3"/>
<rect class="w" x="131.8" y="107.8" width="10.94" height="40.7"/>
<rect class="lp" x="131.8" y="148.5" width="10.94" height="41.8"/>
<rect class="dp" x="131.8" y="190.3" width="10.94" height="84.3"/>
<rect class="w" x="131.8" y="274.6" width="10.94" height="90.7"/>
<rect class="lp" x="142.7" y="28.7" width="10.94" height="54.4"/>
<rect class="dp" x="142.7" y="83.1" width="10.94" height="15.6"/>
<rect class="w" x="142.7" y="98.7" width="10.94" height="63.9"/>
<rect class="lp" x="142.7" y="162.6" width="10.94" height="23.6"/>
<rect class="dp" x="142.7" y="186.2" width="10.94" height="93.4"/>
<rect class="w" x="142.7" y="279.6" width="10.94" height="85.7"/>
<rect class="lp" x="142.7" y="365.3" width="10.94" height="31.1"/>
<rect class="lp" x="153.6" y="28.7" width="10.94" height="60.9"/>
<rect class="w" x="153.6" y="89.6" width="10.94" height="82.5"/>
<rect class="lp" x="153.6" y="172.1" width="10.94" height="14.1"/>
<rect class="dp" x="153.6" y="186.2" width="10.94" height="98.4"/>
<rect class="w" x="153.6" y="284.6" width="10.94" height="60.5"/>
<rect class="lp" x="153.6" y="345.1" width="10.94" height="58.1"/>
<rect class="lp" x="164.5" y="28.7" width="10.94" height="56.7"/>
<rect class="w" x="164.5" y="85.4" width="10.94" height="95.8"/>
<rect class="dp" x="164.5" y="181.2" width="10.94" height="103.4"/>
<rect class="w" x="164.5" y="284.6" width="10.94" height="38.1"/>
<rect class="lp" x="164.5" y="322.7" width="10.94" height="80.5"/>
<rect class="lp" x="175.4" y="29.6" width="10.94" height="53.3"/>
<rect class="w" x="175.4" y="82.9" width="10.94" height="98.3"/>
<rect class="dp" x="175.4" y="181.2" width="10.94" height="107.4"/>
<rect class="w" x="175.4" y="288.6" width="10.94" height="20.8"/>
<rect class="lp" x="175.4" y="309.4" width="10.94" height="88.3"/>
<rect class="lp" x="186.2" y="30.4" width="10.94" height="52.5"/>
<rect class="w" x="186.2" y="82.9" width="10.94" height="98.3"/>
<rect class="dp" x="186.2" y="181.2" width="10.94" height="107.4"/>
<rect class="w" x="186.2" y="288.6" width="10.94" height="11.7"/>
<rect class="lp" x="186.2" y="300.3" width="10.94" height="97.4"/>
<rect class="lp" x="197.1" y="30.4" width="10.94" height="52.5"/>
<rect class="w" x="197.1" y="82.9" width="10.94" height="98.3"/>
<rect class="dp" x="197.1" y="181.2" width="10.94" height="108.4"/>
<rect class="lp" x="197.1" y="289.6" width="10.94" height="104.0"/>
<rect class="lp" x="208.0" y="35.4" width="10.94" height="52.3"/>
<rect class="w" x="208.0" y="87.7" width="10.94" height="93.3"/>
<rect class="dp" x="208.0" y="181.0" width="10.94" height="109.1"/>
<rect class="lp" x="208.0" y="290.1" width="10.94" height="99.3"/>
<rect class="lp" x="218.9" y="40.3" width="10.94" height="47.4"/>
<rect class="w" x="218.9" y="87.7" width="10.94" height="95.8"/>
<rect class="dp" x="218.9" y="183.5" width="10.94" height="106.6"/>
<rect class="lp" x="218.9" y="290.1" width="10.94" height="94.2"/>
<rect class="lp" x="229.8" y="44.5" width="10.94" height="47.3"/>
<rect class="w" x="229.8" y="91.8" width="10.94" height="91.7"/>
<rect class="dp" x="229.8" y="183.5" width="10.94" height="102.5"/>
<rect class="lp" x="229.8" y="286.0" width="10.94" height="93.3"/>
<rect class="lp" x="240.7" y="49.5" width="10.94" height="47.3"/>
<rect class="w" x="240.7" y="96.8" width="10.94" height="90.8"/>
<rect class="dp" x="240.7" y="187.6" width="10.94" height="94.2"/>
<rect class="lp" x="240.7" y="281.8" width="10.94" height="93.3"/>
<rect class="lp" x="251.6" y="57.8" width="10.94" height="47.3"/>
<rect class="w" x="251.6" y="105.1" width="10.94" height="87.5"/>
<rect class="dp" x="251.6" y="192.6" width="10.94" height="84.2"/>
<rect class="lp" x="251.6" y="276.8" width="10.94" height="93.3"/>
<rect class="lp" x="262.4" y="67.8" width="10.94" height="46.5"/>
<rect class="w" x="262.4" y="114.3" width="10.94" height="82.5"/>
<rect class="dp" x="262.4" y="196.8" width="10.94" height="75.8"/>
<rect class="lp" x="262.4" y="272.6" width="10.94" height="88.4"/>
<rect class="lp" x="273.3" y="76.9" width="10.94" height="51.8"/>
<rect class="w" x="273.3" y="128.7" width="10.94" height="73.4"/>
<rect class="dp" x="273.3" y="202.1" width="10.94" height="65.5"/>
<rect class="lp" x="273.3" y="267.6" width="10.94" height="84.3"/>
<rect class="lp" x="284.2" y="90.2" width="10.94" height="56.8"/>
<rect class="w" x="284.2" y="147.0" width="10.94" height="63.4"/>
<rect class="dp" x="284.2" y="210.4" width="10.94" height="48.2"/>
<rect class="lp" x="284.2" y="258.6" width="10.94" height="84.1"/>
<rect class="lp" x="295.1" y="113.4" width="10.94" height="56.0"/>
<rect class="w" x="295.1" y="169.4" width="10.94" height="50.9"/>
<rect class="dp" x="295.1" y="220.3" width="10.94" height="29.1"/>
<rect class="lp" x="295.1" y="249.4" width="10.94" height="75.1"/>
<rect class="lp" x="306.0" y="145.3" width="10.94" height="54.0"/>
<rect class="w" x="306.0" y="199.3" width="10.94" height="30.2"/>
<rect class="dp" x="306.0" y="229.5" width="10.94" height="10.8"/>
<rect class="lp" x="306.0" y="240.3" width="10.94" height="60.9"/>
<rect class="lp" x="316.9" y="177.7" width="10.94" height="34.3"/>
<rect class="g" x="316.9" y="212.0" width="10.94" height="39.1"/>
<rect class="g" x="327.8" y="209.7" width="10.94" height="37.2"/>
<rect class="g" x="338.6" y="204.1" width="10.94" height="38.5"/>
<rect class="g" x="349.5" y="199.9" width="10.94" height="38.0"/>
<rect class="g" x="360.4" y="195.8" width="10.94" height="37.3"/>
<rect class="g" x="371.3" y="191.2" width="10.94" height="37.9"/>
<rect class="g" x="382.2" y="187.4" width="10.94" height="36.7"/>
<rect class="g" x="393.1" y="187.4" width="10.94" height="36.7"/>
<rect class="g" x="403.9" y="181.6" width="10.94" height="37.1"/>
<rect class="g" x="414.8" y="181.6" width="10.94" height="37.1"/>
</g><g fill="url(#gp)"><rect x="55.6" y="95.4" width="10.94" height="9.1"/>
<rect x="55.6" y="271.2" width="10.94" height="12.5"/>
<rect x="66.5" y="85.1" width="10.94" height="33.5"/>
<rect x="66.5" y="152.6" width="10.94" height="20.3"/>
<rect x="66.5" y="259.3" width="10.94" height="32.7"/>
<rect x="77.4" y="76.3" width="10.94" height="51.5"/>
<rect x="77.4" y="142.6" width="10.94" height="39.4"/>
<rect x="77.4" y="218.6" width="10.94" height="14.1"/>
<rect x="77.4" y="250.1" width="10.94" height="47.7"/>
<rect x="77.4" y="312.7" width="10.94" height="16.7"/>
<rect x="88.3" y="71.5" width="10.94" height="65.4"/>
<rect x="88.3" y="136.9" width="10.94" height="55.1"/>
<rect x="88.3" y="209.5" width="10.94" height="33.1"/>
<rect x="88.3" y="242.6" width="10.94" height="60.2"/>
<rect x="88.3" y="302.8" width="10.94" height="40.1"/>
<rect x="99.2" y="42.6" width="10.94" height="11.8"/>
<rect x="99.2" y="66.7" width="10.94" height="65.2"/>
<rect x="99.2" y="131.9" width="10.94" height="67.6"/>
<rect x="99.2" y="199.5" width="10.94" height="51.5"/>
<rect x="99.2" y="251.0" width="10.94" height="40.1"/>
<rect x="99.2" y="291.1" width="10.94" height="60.9"/>
<rect x="110.1" y="37.8" width="10.94" height="26.8"/>
<rect x="110.1" y="64.6" width="10.94" height="64.0"/>
<rect x="110.1" y="128.6" width="10.94" height="66.7"/>
<rect x="110.1" y="195.3" width="10.94" height="64.8"/>
<rect x="110.1" y="260.1" width="10.94" height="21.9"/>
<rect x="110.1" y="282.0" width="10.94" height="75.0"/>
<rect x="120.9" y="33.5" width="10.94" height="35.9"/>
<rect x="120.9" y="69.4" width="10.94" height="48.4"/>
<rect x="120.9" y="117.8" width="10.94" height="17.4"/>
<rect x="120.9" y="135.2" width="10.94" height="55.1"/>
<rect x="120.9" y="190.3" width="10.94" height="80.9"/>
<rect x="120.9" y="271.2" width="10.94" height="5.8"/>
<rect x="120.9" y="277.0" width="10.94" height="84.2"/>
<rect x="131.8" y="28.7" width="10.94" height="49.8"/>
<rect x="131.8" y="78.5" width="10.94" height="29.3"/>
<rect x="131.8" y="107.8" width="10.94" height="40.7"/>
<rect x="131.8" y="148.5" width="10.94" height="41.8"/>
<rect x="131.8" y="190.3" width="10.94" height="84.3"/>
<rect x="131.8" y="274.6" width="10.94" height="90.7"/>
<rect x="142.7" y="28.7" width="10.94" height="54.4"/>
<rect x="142.7" y="83.1" width="10.94" height="15.6"/>
<rect x="142.7" y="98.7" width="10.94" height="63.9"/>
<rect x="142.7" y="162.6" width="10.94" height="23.6"/>
<rect x="142.7" y="186.2" width="10.94" height="93.4"/>
<rect x="142.7" y="279.6" width="10.94" height="85.7"/>
<rect x="142.7" y="365.3" width="10.94" height="31.1"/>
<rect x="153.6" y="28.7" width="10.94" height="60.9"/>
<rect x="153.6" y="89.6" width="10.94" height="82.5"/>
<rect x="153.6" y="172.1" width="10.94" height="14.1"/>
<rect x="153.6" y="186.2" width="10.94" height="98.4"/>
<rect x="153.6" y="284.6" width="10.94" height="60.5"/>
<rect x="153.6" y="345.1" width="10.94" height="58.1"/>
<rect x="164.5" y="28.7" width="10.94" height="56.7"/>
<rect x="164.5" y="85.4" width="10.94" height="95.8"/>
<rect x="164.5" y="181.2" width="10.94" height="103.4"/>
<rect x="164.5" y="284.6" width="10.94" height="38.1"/>
<rect x="164.5" y="322.7" width="10.94" height="80.5"/>
<rect x="175.4" y="29.6" width="10.94" height="53.3"/>
<rect x="175.4" y="82.9" width="10.94" height="98.3"/>
<rect x="175.4" y="181.2" width="10.94" height="107.4"/>
<rect x="175.4" y="288.6" width="10.94" height="20.8"/>
<rect x="175.4" y="309.4" width="10.94" height="88.3"/>
<rect x="186.2" y="30.4" width="10.94" height="52.5"/>
<rect x="186.2" y="82.9" width="10.94" height="98.3"/>
<rect x="186.2" y="181.2" width="10.94" height="107.4"/>
<rect x="186.2" y="288.6" width="10.94" height="11.7"/>
<rect x="186.2" y="300.3" width="10.94" height="97.4"/>
<rect x="197.1" y="30.4" width="10.94" height="52.5"/>
<rect x="197.1" y="82.9" width="10.94" height="98.3"/>
<rect x="197.1" y="181.2" width="10.94" height="108.4"/>
<rect x="197.1" y="289.6" width="10.94" height="104.0"/>
<rect x="208.0" y="35.4" width="10.94" height="52.3"/>
<rect x="208.0" y="87.7" width="10.94" height="93.3"/>
<rect x="208.0" y="181.0" width="10.94" height="109.1"/>
<rect x="208.0" y="290.1" width="10.94" height="99.3"/>
<rect x="218.9" y="40.3" width="10.94" height="47.4"/>
<rect x="218.9" y="87.7" width="10.94" height="95.8"/>
<rect x="218.9" y="183.5" width="10.94" height="106.6"/>
<rect x="218.9" y="290.1" width="10.94" height="94.2"/>
<rect x="229.8" y="44.5" width="10.94" height="47.3"/>
<rect x="229.8" y="91.8" width="10.94" height="91.7"/>
<rect x="229.8" y="183.5" width="10.94" height="102.5"/>
<rect x="229.8" y="286.0" width="10.94" height="93.3"/>
<rect x="240.7" y="49.5" width="10.94" height="47.3"/>
<rect x="240.7" y="96.8" width="10.94" height="90.8"/>
<rect x="240.7" y="187.6" width="10.94" height="94.2"/>
<rect x="240.7" y="281.8" width="10.94" height="93.3"/>
<rect x="251.6" y="57.8" width="10.94" height="47.3"/>
<rect x="251.6" y="105.1" width="10.94" height="87.5"/>
<rect x="251.6" y="192.6" width="10.94" height="84.2"/>
<rect x="251.6" y="276.8" width="10.94" height="93.3"/>
<rect x="262.4" y="67.8" width="10.94" height="46.5"/>
<rect x="262.4" y="114.3" width="10.94" height="82.5"/>
<rect x="262.4" y="196.8" width="10.94" height="75.8"/>
<rect x="262.4" y="272.6" width="10.94" height="88.4"/>
<rect x="273.3" y="76.9" width="10.94" height="51.8"/>
<rect x="273.3" y="128.7" width="10.94" height="73.4"/>
<rect x="273.3" y="202.1" width="10.94" height="65.5"/>
<rect x="273.3" y="267.6" width="10.94" height="84.3"/>
<rect x="284.2" y="90.2" width="10.94" height="56.8"/>
<rect x="284.2" y="147.0" width="10.94" height="63.4"/>
<rect x="284.2" y="210.4" width="10.94" height="48.2"/>
<rect x="284.2" y="258.6" width="10.94" height="84.1"/>
<rect x="295.1" y="113.4" width="10.94" height="56.0"/>
<rect x="295.1" y="169.4" width="10.94" height="50.9"/>
<rect x="295.1" y="220.3" width="10.94" height="29.1"/>
<rect x="295.1" y="249.4" width="10.94" height="75.1"/>
<rect x="306.0" y="145.3" width="10.94" height="54.0"/>
<rect x="306.0" y="199.3" width="10.94" height="30.2"/>
<rect x="306.0" y="229.5" width="10.94" height="10.8"/>
<rect x="306.0" y="240.3" width="10.94" height="60.9"/>
<rect x="316.9" y="177.7" width="10.94" height="34.3"/>
<rect x="316.9" y="212.0" width="10.94" height="39.1"/>
<rect x="327.8" y="209.7" width="10.94" height="37.2"/>
<rect x="338.6" y="204.1" width="10.94" height="38.5"/>
<rect x="349.5" y="199.9" width="10.94" height="38.0"/>
<rect x="360.4" y="195.8" width="10.94" height="37.3"/>
<rect x="371.3" y="191.2" width="10.94" height="37.9"/>
<rect x="382.2" y="187.4" width="10.94" height="36.7"/>
<rect x="393.1" y="187.4" width="10.94" height="36.7"/>
<rect x="403.9" y="181.6" width="10.94" height="37.1"/>
<rect x="414.8" y="181.6" width="10.94" height="37.1"/>
</g>
<rect x="0.5" y="0.5" width="425.5" height="430" fill="none" stroke="#3c3cc8" stroke-width="1"/>
</svg>
<!-- selection handles -->
<div class="a" style="left:86.2px;top:82.8px;width:5px;height:5px;border:1.2px solid #3c3cd0;background:#fff"></div>
<div class="a" style="left:298.8px;top:82.8px;width:5px;height:5px;border:1.2px solid #3c3cd0;background:#fff"></div>
<div class="a" style="left:511.6px;top:82.8px;width:5px;height:5px;border:1.2px solid #3c3cd0;background:#fff"></div>
<div class="a" style="left:86.2px;top:297.6px;width:5px;height:5px;border:1.2px solid #3c3cd0;background:#fff"></div>
<div class="a" style="left:511.6px;top:297.6px;width:5px;height:5px;border:1.2px solid #3c3cd0;background:#fff"></div>
<div class="a" style="left:86.2px;top:513.6px;width:5px;height:5px;border:1.2px solid #3c3cd0;background:#fff"></div>
<div class="a" style="left:298.8px;top:513.6px;width:5px;height:5px;border:1.2px solid #3c3cd0;background:#fff"></div>
<div class="a" style="left:511.6px;top:513.6px;width:5px;height:5px;border:1.2px solid #3c3cd0;background:#fff"></div>
<!-- vertical scrollbar -->
<div class="a" style="left:1008px;top:49px;width:12.2px;height:560px;background:#4f4f4f"></div>
<div class="a" style="left:1009px;top:321px;width:11px;height:20.5px;background:#6b6b6b;border-radius:5.5px"></div>
<svg class="a" style="left:1010px;top:53px" width="8" height="6" viewBox="0 0 8 6"><path d="M1.3 4.8 L4.2 2 L7.1 4.8" stroke="#c4c4c4" stroke-width="1.5" fill="none"/></svg>
<svg class="a" style="left:1010px;top:599px" width="8" height="6" viewBox="0 0 8 6"><path d="M1 1.5 L4 4.5 L7 1.5" stroke="#cfcfcf" stroke-width="1.4" fill="none"/></svg>
<div class="a" style="left:1020.2px;top:12px;width:3.8px;height:614px;background:#5a5a5a;border-left:1px solid #3a3a3a;border-right:0.5px solid #3a3a3a"></div>
<!-- toolbar -->
<div class="a" style="left:3px;top:27px;width:30.5px;height:596px;background:#535353;border-left:1px solid #474747"></div>
<div class="a" style="left:33.5px;top:27px;width:2px;height:596px;background:#393939"></div>
<div class="a" style="left:4px;top:27px;width:29px;height:9px;background:#434343"></div>
<svg class="a" style="left:7px;top:29.5px" width="7" height="5" viewBox="0 0 7 5"><path d="M0.5 0.5 L3 2.5 L0.5 4.5Z M3.5 0.5 L6 2.5 L3.5 4.5Z" fill="#d8d8d8"/></svg>
<div class="a" style="left:10px;top:39px;width:15px;height:1px;background:#5d5d5d"></div>
<svg class="a" style="left:0;top:0" width="36" height="500" viewBox="0 0 36 500">
<g fill="none" stroke="#cdcdcd" stroke-width="1.2" stroke-linejoin="round">
<!-- selection -->
<path d="M15.3 55 L23.4 63.1 L18.8 63.6 L15.3 66.7 Z" fill="#4a4a4a"/>
</g>
<path d="M15.3 73.6 L23.9 81.6 L19 82.2 L15.3 85.8 Z" fill="#d0d0d0"/>
<g fill="#c8c8c8">
<path d="M28.6 84.1 L28.6 86.7 L26 86.7Z"/>
<path d="M28.6 102.1 L28.6 104.7 L26 104.7Z"/>
<path d="M28.6 139.6 L28.6 142.2 L26 142.2Z"/>
<path d="M28.6 158.1 L28.6 160.7 L26 160.7Z"/>
<path d="M28.6 176.1 L28.6 178.7 L26 178.7Z"/>
<path d="M28.6 194.8 L28.6 197.4 L26 197.4Z"/>
<path d="M28.6 213.3 L28.6 215.9 L26 215.9Z"/>
<path d="M28.6 249.8 L28.6 252.4 L26 252.4Z"/>
<path d="M28.6 363.3 L28.6 365.9 L26 365.9Z"/>
</g>
<!-- pen -->
<g transform="translate(18.6 97.6) rotate(45)">
<rect x="-2.6" y="-7" width="5.2" height="3" rx="0.6" fill="#d4d4d4"/>
<path d="M-3.4 -3 L3.4 -3 L3.4 1.2 L0 7 L-3.4 1.2 Z" fill="#d4d4d4"/>
<path d="M0 1 V6.5" stroke="#555" stroke-width="0.9"/>
</g>
<!-- curvature pen -->
<g transform="translate(20.2 116.5) rotate(45)">
<rect x="-2.6" y="-7" width="5.2" height="3" rx="0.6" fill="#d4d4d4"/>
<path d="M-3.4 -3 L3.4 -3 L3.4 1.2 L0 7 L-3.4 1.2 Z" fill="#d4d4d4"/>
<path d="M0 1 V6.5" stroke="#555" stroke-width="0.9"/>
</g>
<path d="M11.3 111.5 C14 111.5 13.5 116 12.8 118.5 C12 121 13 122.5 15.5 122" fill="none" stroke="#d0d0d0" stroke-width="1.2"/>
<!-- rectangle -->
<rect x="12.6" y="129.4" width="12.6" height="10.6" fill="#5e5e5e" stroke="#d0d0d0" stroke-width="1.2"/>
<!-- brush -->
<path d="M24.6 146.6 L18.4 154.2 L16.8 152.8 Z" fill="#d4d4d4"/>
<path d="M17 153.3 C14 153.6 14.2 157 12.3 159.6 C15.5 159.6 18.2 158.2 18.6 155 Z" fill="#d4d4d4"/>
<!-- type -->
<path d="M13.4 166.4 H24.2 V169.2 H23.2 V167.7 H19.6 V176 H21.6 V177.4 H16 V176 H18 V167.7 H14.4 V169.2 H13.4 Z" fill="#d8d8d8"/>
<!-- rotate -->
<path d="M14.2 187.5 A5.5 5.5 0 1 1 13.4 193" fill="none" stroke="#d0d0d0" stroke-width="1.3"/>
<path d="M11.8 185 L16.8 185.6 L12.6 189.6 Z" fill="#d0d0d0"/>
<!-- eraser -->
<g transform="translate(18.5 208.7) rotate(-40)">
<rect x="-6.5" y="-3.3" width="13" height="6.6" rx="0.8" fill="#d2d2d2"/>
<rect x="-5.4" y="-2.2" width="3.4" height="4.4" fill="#555"/>
</g>
<!-- shape builder -->
<path d="M14.5 223 C11 223 10.5 228 13 229.5 C15 231 19 231 21 229.5 C23.8 228 24 224.5 21.5 223.3 C20.5 221 16.5 220.5 14.5 223 Z" fill="none" stroke="#cfcfcf" stroke-width="1.1"/>
<path d="M13.5 226.5 H19.5" stroke="#cfcfcf" stroke-width="1"/>
<path d="M19.3 226 L19.3 234 L21.2 232.2 L23.3 235 L24.5 234.2 L22.6 231.5 L25.2 231 Z" fill="#d6d6d6"/>
<!-- gradient -->
<defs><linearGradient id="gr" x1="0" x2="1" y1="0.2" y2="0.8"><stop offset="0" stop-color="#222"/><stop offset="1" stop-color="#e0e0e0"/></linearGradient></defs>
<rect x="12.6" y="240.2" width="12.4" height="11.4" fill="url(#gr)" stroke="#cfcfcf" stroke-width="1.1"/>
<!-- blend -->
<g transform="translate(18 264) rotate(45)">
<rect x="-1" y="-5" width="2" height="10" fill="#d0d0d0"/>
<rect x="-4" y="-7" width="8" height="2.2" rx="1" fill="#d0d0d0"/>
<rect x="-4" y="4.8" width="8" height="2.2" rx="1" fill="#d0d0d0"/>
</g>
<!-- eyedropper -->
<g transform="translate(18.5 283.3) rotate(45)">
<rect x="-1.8" y="-9" width="3.6" height="4" rx="1.6" fill="#d4d4d4"/>
<rect x="-2.6" y="-5" width="5.2" height="1.4" fill="#d4d4d4"/>
<path d="M-1.3 -3.6 H1.3 V6 L0 8.5 L-1.3 6 Z" fill="none" stroke="#d4d4d4" stroke-width="1"/>
</g>
<!-- puppet warp -->
<path d="M12.5 299 C14 296 17 296 17 299 C17 302 20 300 22 299.5 C24 299 25.5 301 25 303 C24 305.5 20 306 17 305 C15 304.5 14 306 12.5 306.5" fill="none" stroke="#d2d2d2" stroke-width="1.5"/>
<circle cx="12.5" cy="306" r="1.2" fill="#d2d2d2"/>
<circle cx="19" cy="302.5" r="1.5" fill="#d2d2d2"/>
<!-- symbol -->
<rect x="11.4" y="315.2" width="6" height="5.2" fill="#d2d2d2"/>
<rect x="15.2" y="317.8" width="6" height="6" fill="#5a5a5a" stroke="#d2d2d2" stroke-width="1.1"/>
<circle cx="22.6" cy="322.6" r="3" fill="#5a5a5a" stroke="#d2d2d2" stroke-width="1.1"/>
<!-- artboard -->
<path d="M14.5 331.5 V344 H24 V336.5 L21.5 334.5 H11.5" fill="none" stroke="#d2d2d2" stroke-width="1.1"/>
<path d="M14.5 336 H21 L23.2 338 V343.2 H15.5 Z" fill="#6a6a6a"/>
<!-- zoom -->
<circle cx="17" cy="355.5" r="4.3" fill="none" stroke="#d4d4d4" stroke-width="1.4"/>
<path d="M20.2 358.8 L24.3 363" stroke="#d4d4d4" stroke-width="2" stroke-linecap="round"/>
<!-- default fill stroke -->
<rect x="8.4" y="372.6" width="6.2" height="6.2" fill="#111" stroke="#d6d6d6" stroke-width="1"/>
<rect x="11.3" y="375.5" width="5.5" height="5.5" fill="#e6e6e6" stroke="#222" stroke-width="0.8"/>
<rect x="12.6" y="376.8" width="2.9" height="2.9" fill="#111"/>
<!-- swap -->
<path d="M23.5 375 L27.5 375 C29.5 375 30 377 30 378.5 L30 380" fill="none" stroke="#d4d4d4" stroke-width="1.1"/>
<path d="M25 373 L22.8 375 L25 377Z M28 379 L30 381.4 L32 379Z" fill="#d4d4d4"/>
<!-- stroke swatch -->
<rect x="16" y="394.4" width="13.2" height="13.2" fill="#222" stroke="#f0f0f0" stroke-width="1.2"/>
<rect x="18.4" y="396.8" width="8.4" height="8.4" fill="#555" stroke="#f0f0f0" stroke-width="1.2"/>
<rect x="20" y="398.4" width="5.2" height="5.2" fill="#3e3e3e"/>
<!-- fill swatch -->
<rect x="8.2" y="387.4" width="13.8" height="13.2" fill="#7c9b3b" stroke="#f2f2f2" stroke-width="1"/>
<!-- color modes -->
<rect x="8" y="414.8" width="6.6" height="5.8" fill="#7c9b3b" stroke="#ddd" stroke-width="0.6"/>
<rect x="15.5" y="414.8" width="5.6" height="5.8" fill="#c8c8c8"/>
<rect x="15.5" y="414.8" width="2.2" height="5.8" fill="#8aa35a"/>
<rect x="22.4" y="414.8" width="6.6" height="5.8" fill="#f2f2f2"/>
<path d="M22.6 420.4 L28.8 415" stroke="#e0202a" stroke-width="1.4"/>
<!-- draw modes -->
<circle cx="18" cy="431" r="2.8" fill="none" stroke="#cfcfcf" stroke-width="1"/>
<rect x="17.5" y="431.2" width="5" height="4.8" fill="#5a5a5a" stroke="#cfcfcf" stroke-width="1"/>
<rect x="19" y="432.6" width="2" height="2" fill="#cfcfcf"/>
<!-- screen mode -->
<rect x="17" y="445.6" width="10.6" height="7.2" fill="none" stroke="#cfcfcf" stroke-width="1.1"/>
<rect x="11.4" y="449" width="10.6" height="7" fill="#5a5a5a" stroke="#cfcfcf" stroke-width="1.1"/>
<!-- more -->
<circle cx="14.3" cy="476.6" r="1.1" fill="#d6d6d6"/>
<circle cx="18.8" cy="476.6" r="1.1" fill="#d6d6d6"/>
<circle cx="23.3" cy="476.6" r="1.1" fill="#d6d6d6"/>
</svg>

<!-- status bar -->
<div class="a" style="left:35.5px;top:608.5px;width:985px;height:14.5px;background:#4e4e4e;border-top:1px solid #454545"></div>
<div class="a" style="left:38px;top:609.5px;width:39px;height:13px;background:#444"></div>
<div class="a" style="left:40.5px;top:612.9px;font-size:8.5px;color:#f2f2f2;letter-spacing:-0.4px">40.4%</div>
<svg class="a" style="left:80px;top:614px" width="8" height="5" viewBox="0 0 8 5"><path d="M1 1 L4 4 L7 1" stroke="#ddd" stroke-width="1.5" fill="none"/></svg>
<div class="a" style="left:94.5px;top:609.5px;width:39px;height:13px;background:#444"></div>
<div class="a" style="left:97px;top:612.9px;font-size:8.5px;color:#f2f2f2">0°</div>
<svg class="a" style="left:136px;top:614px" width="8" height="5" viewBox="0 0 8 5"><path d="M1 1 L4 4 L7 1" stroke="#ddd" stroke-width="1.5" fill="none"/></svg>
<svg class="a" style="left:153px;top:612px" width="22" height="8" viewBox="0 0 22 8"><path d="M1.5 0.5 V7.5" stroke="#6f6f6f" stroke-width="1.2"/><path d="M7 0.8 L3 4 L7 7.2Z M19 0.8 L15 4 L19 7.2Z" fill="#6f6f6f"/></svg>
<div class="a" style="left:180px;top:609.5px;width:32px;height:13px;background:#444"></div>
<div class="a" style="left:183px;top:612.9px;font-size:8.5px;color:#f2f2f2">1</div>
<svg class="a" style="left:214px;top:614px" width="8" height="5" viewBox="0 0 8 5"><path d="M1 1 L4 4 L7 1" stroke="#ddd" stroke-width="1.5" fill="none"/></svg>
<svg class="a" style="left:231px;top:612px" width="22" height="8" viewBox="0 0 22 8"><path d="M2 0.8 L6 4 L2 7.2Z M13 0.8 L17 4 L13 7.2Z" fill="#6f6f6f"/><path d="M19.5 0.5 V7.5" stroke="#6f6f6f" stroke-width="1.2"/></svg>
<div class="a" style="left:319.5px;top:612.9px;font-size:8.5px;color:#eaeaea;letter-spacing:-0.45px">Selection</div>
<svg class="a" style="left:415px;top:612px" width="8" height="8" viewBox="0 0 8 8"><path d="M2 0.5 L6.5 4 L2 7.5Z" fill="#ddd"/></svg>
<svg class="a" style="left:430px;top:612px" width="8" height="8" viewBox="0 0 8 8"><path d="M5.5 1 L2.5 4 L5.5 7" stroke="#aaa" stroke-width="1.2" fill="none"/></svg>
<div class="a" style="left:440px;top:609.5px;width:566px;height:13px;background:#4a4a4a"></div>
<div class="a" style="left:716px;top:610px;width:20px;height:11px;background:#666;border-radius:5.5px"></div>
<svg class="a" style="left:998px;top:613px" width="6" height="8" viewBox="0 0 6 8"><path d="M1.5 1 L4.5 4 L1.5 7" stroke="#cfcfcf" stroke-width="1.3" fill="none"/></svg>
<div class="a" style="left:0;top:623px;width:1024px;height:3px;background:#333"></div>
<!-- layers panel -->
<div class="a" style="left:705px;top:340px;width:4px;height:220px;background:#686868"></div>
<div class="a" style="left:709.8px;top:335px;width:180px;height:224.5px;background:#565656;border:1.5px solid #383838;border-top:none"></div>
<div class="a" style="left:710px;top:335px;width:179px;height:10px;background:#3d3d3d"></div>
<svg class="a" style="left:864px;top:338px" width="8" height="6" viewBox="0 0 8 6"><path d="M3.5 0.5 L0.8 3 L3.5 5.5Z M7.2 0.5 L4.5 3 L7.2 5.5Z" fill="#d6d6d6"/></svg>
<svg class="a" style="left:879px;top:337.5px" width="7" height="7" viewBox="0 0 7 7"><path d="M1 1 L6 6 M6 1 L1 6" stroke="#dedede" stroke-width="1.5"/></svg>
<div class="a" style="left:710px;top:345px;width:179px;height:22px;background:#434343"></div>
<div class="a" style="left:710px;top:345px;width:37px;height:22px;background:#535353"></div>
<div class="a" style="left:717.5px;top:350.5px;font-size:8px;font-weight:bold;color:#f2f2f2;letter-spacing:-0.35px">Layers</div>
<svg class="a" style="left:874px;top:351px" width="11" height="9" viewBox="0 0 11 9"><path d="M1 1.8 H10 M1 4.5 H10 M1 7.2 H10" stroke="#cfcfcf" stroke-width="1.1"/></svg>
<div class="a" style="left:710px;top:367px;width:179px;height:186px;background:#535353"></div>
<div class="a" style="left:719.5px;top:375.3px;width:141.5px;height:16.2px;background:#454545;border-top:1px solid #3e3e3e"></div>
<svg class="a" style="left:723px;top:379px" width="12" height="11" viewBox="0 0 12 11"><circle cx="5" cy="4.6" r="3.2" fill="none" stroke="#d8d8d8" stroke-width="1.3"/><path d="M7.3 7 L10 9.6" stroke="#d8d8d8" stroke-width="1.6" stroke-linecap="round"/></svg>
<div class="a" style="left:741px;top:377.5px;font-size:10px;color:#5b5b5b;letter-spacing:-0.3px">Search All</div>
<svg class="a" style="left:868px;top:377px" width="13" height="14" viewBox="0 0 13 14"><path d="M1 1.2 H12 L7.6 6.6 V12.8 L5.4 11.4 V6.6 Z" fill="#d2d2d2"/></svg>
<!-- rows -->
<div class="a" style="left:715px;top:398.5px;width:169px;height:1px;background:#4a4a4a"></div>
<div class="row" style="top:399.5px"><div class="cb" style="background:#c94fd9"></div><svg class="chev" width="6" height="8" viewBox="0 0 6 8"><path d="M1.5 1 L4.5 4 L1.5 7" stroke="#ececec" stroke-width="1.6" fill="none"/></svg><div class="th" style="background:#fafafa"></div><div class="rt">Scale</div><div class="tg"></div></div>
<div class="row" style="top:415.8px"><div class="cb" style="background:#4fd9d9"></div><svg class="chev" width="6" height="8" viewBox="0 0 6 8"><path d="M1.5 1 L4.5 4 L1.5 7" stroke="#ececec" stroke-width="1.6" fill="none"/></svg><div class="th" style="background:radial-gradient(circle at 45% 50%,#eef0dc 0,#d0d8c0 35%,#a6b5a6 70%,#95a69a 100%)"></div><div class="rt">Color 03</div><div class="tg"></div></div>
<div class="row" style="top:432.1px"><div class="cb" style="background:#c94fd9"></div><svg class="chev" width="6" height="8" viewBox="0 0 6 8"><path d="M1.5 1 L4.5 4 L1.5 7" stroke="#ececec" stroke-width="1.6" fill="none"/></svg><div class="th" style="background:radial-gradient(circle at 50% 50%,#eec4cf 0,#e4a0b4 45%,#dc8aa4 100%)"></div><div class="rt">Color 02</div><div class="tg"></div></div>
<div class="row" style="top:448.4px;background:#4b6282;border-bottom-color:#4b6282"><div class="cb" style="background:#4f4fd9"></div><svg class="chev" width="6" height="8" viewBox="0 0 6 8"><path d="M1.5 1 L4.5 4 L1.5 7" stroke="#ececec" stroke-width="1.6" fill="none"/></svg><div class="th" style="background:radial-gradient(circle at 50% 50%,#e6aabc 0,#dcbcb8 40%,#c6cc98 75%,#bfc690 100%)"></div><div class="rt">Color 01</div><div class="tg"></div>
<svg class="a" style="left:2.5px;top:4.5px" width="11" height="7" viewBox="0 0 11 7"><path d="M0.8 3.5 C3 0.5 8 0.5 10.2 3.5 C8 6.5 3 6.5 0.8 3.5Z" fill="none" stroke="#dfe6ef" stroke-width="1.1"/><circle cx="5.5" cy="3.5" r="1.6" fill="#dfe6ef"/></svg>
<div class="a" style="left:157px;top:5.5px;width:5.5px;height:5.5px;background:#1a1a66;border:1px solid #0a0a33"></div><div class="a" style="left:158.5px;top:7px;width:2.5px;height:2.5px;background:#5a5ae0"></div>
<svg class="a" style="left:164.5px;top:0.5px" width="5" height="5" viewBox="0 0 5 5"><path d="M0 0 H5 V5Z" fill="#f0f0f0"/></svg></div>
<div class="row" style="top:464.7px"><div class="cb" style="background:#000"></div><svg class="chev" width="6" height="8" viewBox="0 0 6 8"><path d="M1.5 1 L4.5 4 L1.5 7" stroke="#ececec" stroke-width="1.6" fill="none"/></svg><div class="th" style="background:radial-gradient(circle at 50% 45%,#dd98b2 0,#ecc8d4 40%,#f8f4f5 75%,#fdfdfd 100%)"></div><div class="rt">Grid</div><div class="tg"></div></div>
<div class="row" style="top:481px"><div class="cb" style="background:#4f4fd9"></div><svg class="chev" width="6" height="8" viewBox="0 0 6 8"><path d="M1.5 1 L4.5 4 L1.5 7" stroke="#ececec" stroke-width="1.6" fill="none"/></svg><div class="th" style="background:radial-gradient(circle at 30% 30%,#5e5040 0 1.2px,transparent 1.6px),radial-gradient(circle at 70% 60%,#6a5a44 0 1.4px,transparent 1.8px),radial-gradient(circle at 40% 75%,#7a6a50 0 1.2px,transparent 1.6px),#cdbf9e"></div><div class="rt">Image</div><div class="tg"></div>
<svg class="a" style="left:20.5px;top:3.5px" width="8" height="9" viewBox="0 0 8 9"><path d="M2 4 V2.6 A2 2 0 0 1 6 2.6 V4" fill="none" stroke="#e0e0e0" stroke-width="1.1"/><rect x="1" y="4" width="6" height="4.5" fill="#e0e0e0"/></svg></div>
<div class="a" style="left:731px;top:399.5px;width:1px;height:97.5px;background:#4e4e4e"></div>
<div class="a" style="left:747px;top:399.5px;width:1px;height:97.5px;background:#4e4e4e"></div>
<div class="a" style="left:856.5px;top:399.5px;width:1px;height:97.5px;background:#4e4e4e"></div>
<div class="a" style="left:714px;top:537px;width:171px;height:1px;background:#4d4d4d"></div>
<div class="a" style="left:714.3px;top:540.2px;font-size:8.6px;color:#e6e6e6;letter-spacing:-0.1px">6 <span style="font-size:8px;letter-spacing:-0.6px">...</span></div>
<svg class="a" style="left:736px;top:537px" width="150" height="14" viewBox="0 0 150 14">
<g fill="none" stroke="#d6d6d6" stroke-width="1.1">
<rect x="5.5" y="3.5" width="7" height="7"/>
<path d="M4 3.5 H5.5 M12.5 3.5 H14 M4 10.5 H5.5 M5.5 2 V3.5 M12.5 2 V3.5 M5.5 10.5 V12"/>
<rect x="22.5" y="4" width="7.5" height="7.5"/>
<path d="M26 8 L31 3 M28 3 H31 V6"/>
<circle cx="45.5" cy="6.3" r="3.4"/><path d="M48 8.8 L51 11.8" stroke-width="1.6"/>
<rect x="63" y="4" width="8.5" height="7.5"/>
<path d="M81.5 3.5 V7 H84" /><rect x="84.5" y="4" width="8" height="7.5"/>
<rect x="104" y="4" width="8.5" height="7.5"/>
<path d="M124 4.5 H130 M125 4.5 V11.5 H129 V4.5 M126 2.5 H128"/>
</g>
<rect x="65" y="6" width="4.5" height="3.5" fill="#d6d6d6"/>
<circle cx="88.5" cy="7.8" r="1.2" fill="#d6d6d6"/>
<circle cx="108.2" cy="7.8" r="1.2" fill="#d6d6d6"/>
</svg>
<div class="a" style="left:711px;top:552.3px;width:177.8px;height:1.5px;background:#3a3a3a"></div>

</body></html>
